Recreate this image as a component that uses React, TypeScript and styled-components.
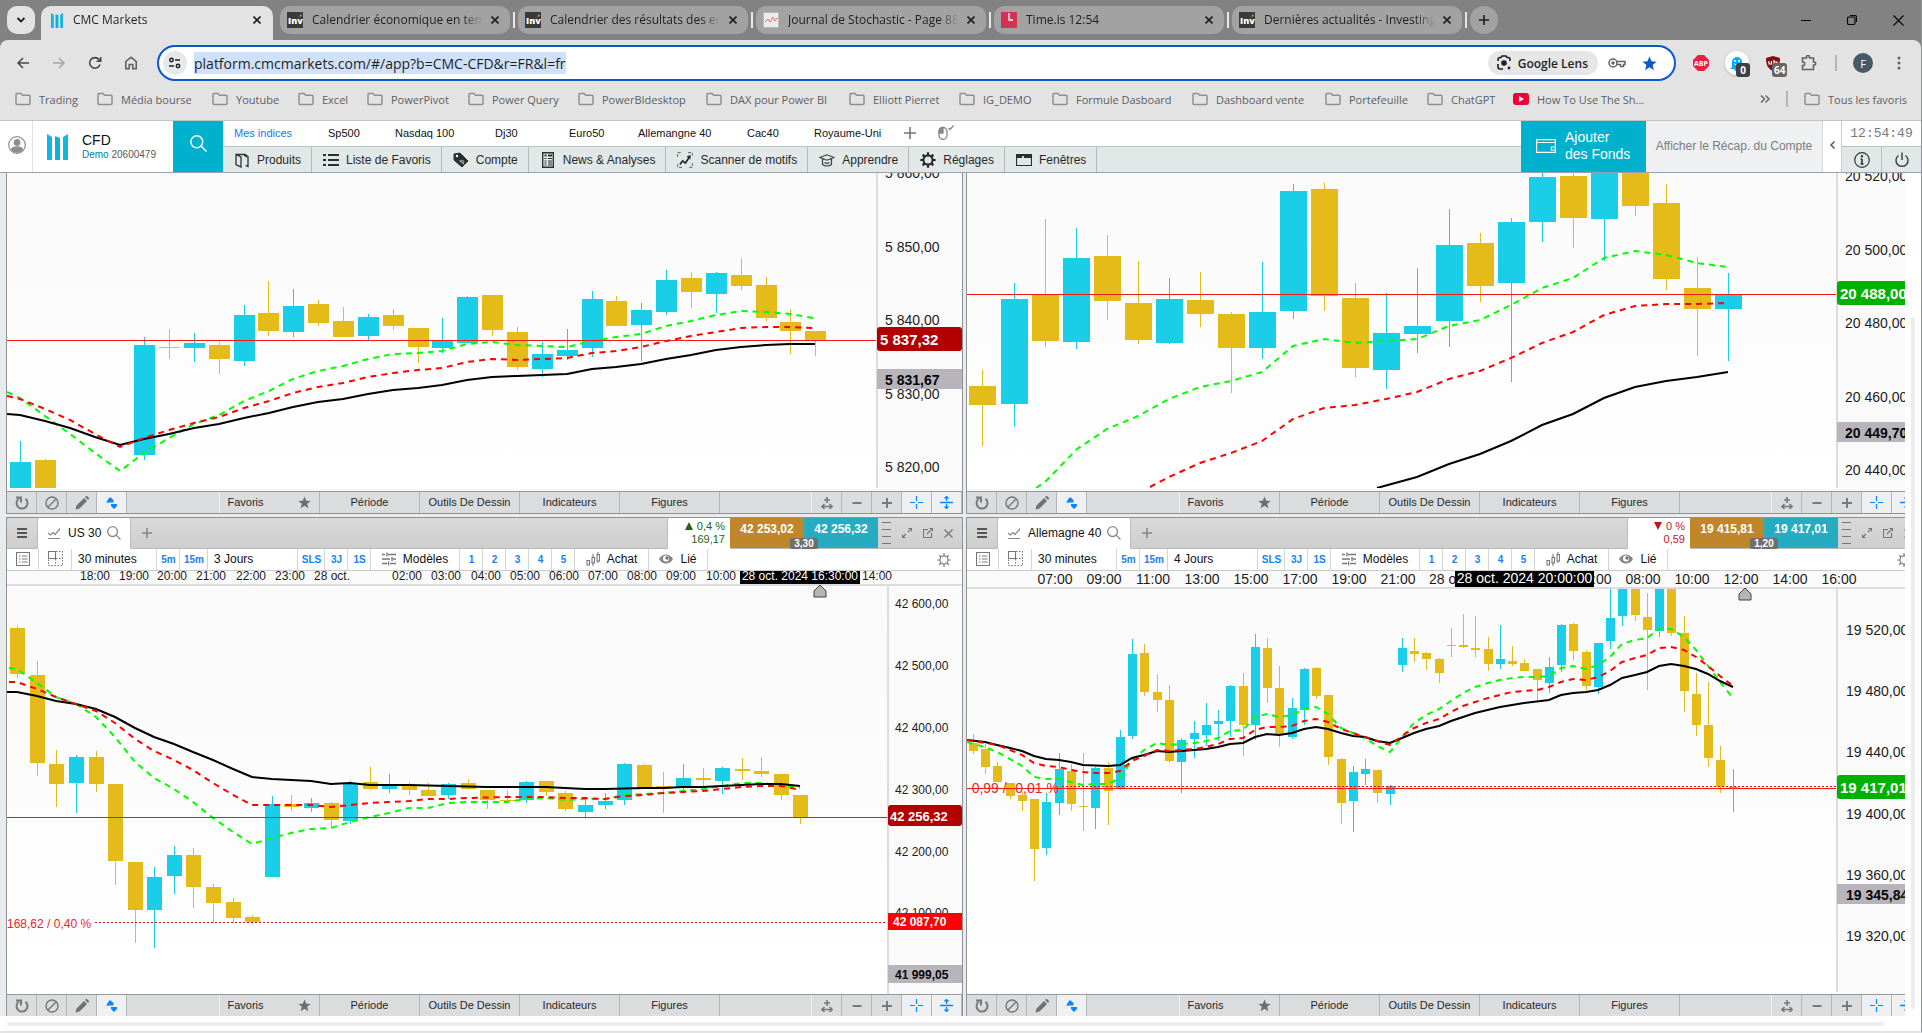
import React from "react";
import styled, { createGlobalStyle, css } from "styled-components";

const UI = `"Open Sans", "Noto Sans", sans-serif`;
const APP = `"Liberation Sans", Arial, sans-serif`;
const BLUE = "#1bcee8";
const GOLD = "#e5bb19";

const Global = createGlobalStyle`
  *, *::before, *::after { box-sizing: border-box; }
  html, body { margin: 0; padding: 0; }
  body { background: #fff; font-family: ${APP}; overflow: hidden; }
  button { font: inherit; color: inherit; border: 0; padding: 0; margin: 0; background: none; cursor: pointer; }
  a { color: inherit; text-decoration: none; }
  svg { display: block; flex: none; }
`;

/* ---------- layout shells ---------- */

const Page = styled.div`
  display: flex;
  flex-direction: column;
  min-height: 100vh;
  border-right: 1px solid #8e9298;
  border-bottom: 2px solid #e2e3e5;
  overflow: hidden;
`;

const center = css`
  display: flex;
  align-items: center;
  justify-content: center;
`;

/* ---------- browser tab strip ---------- */

const TabStrip = styled.header`
  display: flex;
  height: 40px;
  padding: 6px 0 0 7px;
  background: #828282;
  font-family: ${UI};
  font-size: 12px;
  color: #1f1f1f;
`;

const TabSearch = styled.button`
  ${center}
  width: 28px;
  height: 28px;
  margin-right: 6px;
  border-radius: 10px;
  background: #e3e3e3;
`;

const ActiveTab = styled.div`
  position: relative;
  display: flex;
  align-items: center;
  width: 232px;
  height: 34px;
  margin-right: 7px;
  padding: 0 8px 6px 9px;
  border-radius: 10px 10px 0 0;
  background: #e3e3e3;
`;

const Tab = styled.div`
  display: flex;
  align-items: center;
  width: 230px;
  height: 28px;
  padding: 0 7px;
  border-radius: 10px;
  background: #a2a2a2;
`;

const TabTitle = styled.a`
  flex: 1;
  margin: 0 4px 0 9px;
  overflow: hidden;
  white-space: nowrap;
  line-height: 20px;
  mask-image: linear-gradient(90deg, #000 88%, transparent);
`;

const TabClose = styled.button`
  ${center}
  width: 16px;
  height: 16px;
`;

const TabRule = styled.span`
  width: 2px;
  height: 16px;
  margin: 6px 3px 0;
  background: #e6e6e6;
`;

const NewTab = styled.button`
  ${center}
  width: 28px;
  height: 28px;
  border-radius: 14px;
  background: #a2a2a2;
`;

const WindowButtons = styled.div`
  display: flex;
  margin-left: auto;
`;

const WindowButton = styled.button`
  ${center}
  width: 46px;
  height: 28px;
`;

/* ---------- browser toolbar ---------- */

const Chrome = styled.div`
  background: #828282;
`;

const Toolbar = styled.div`
  display: flex;
  align-items: center;
  height: 42px;
  padding: 4px 4px 0 5px;
  border-radius: 8px 8px 0 0;
  background: #e3e3e3;
  font-family: ${UI};
`;

const NavButton = styled.button`
  ${center}
  width: 36px;
  height: 36px;
`;

const AddressBar = styled.form`
  display: flex;
  align-items: center;
  flex: 1;
  height: 36px;
  margin: 0 7px 0 8px;
  padding: 0 14px 0 4px;
  border: 2px solid #0b57d0;
  border-radius: 18px;
  background: #fff;
`;

const SiteInfo = styled.button`
  ${center}
  width: 24px;
  height: 24px;
  margin-right: 7px;
  border-radius: 12px;
  background: #e6e8ea;
`;

const UrlInput = styled.input`
  field-sizing: content;
  height: 22px;
  margin: 0 auto 0 0;
  padding: 0;
  border: 0;
  outline: 0;
  background: #d0e1fc;
  color: #1f1f1f;
  font: 14px ${UI};
`;

const LensButton = styled.button`
  display: flex;
  align-items: center;
  gap: 6px;
  height: 24px;
  margin-right: 8px;
  padding: 0 10px 0 8px;
  border-radius: 12px;
  background: #e6e6e6;
  font-size: 12px;
  font-weight: 600;
  color: #1f1f1f;
`;

const BarButton = styled.button`
  ${center}
  width: 22px;
  height: 24px;
  & + & { margin-left: 10px; }
`;

const ExtButton = styled.button`
  ${center}
  position: relative;
  width: 36px;
  height: 36px;
`;

const ExtBadge = styled.span<{ $dark?: boolean }>`
  position: absolute;
  left: 17px;
  top: 18px;
  height: 14px;
  min-width: 14px;
  padding: 0 2px;
  border-radius: 3px;
  background: ${(p) => (p.$dark ? "#3c4043" : "#666")};
  color: #fff;
  font-size: 10px;
  font-weight: 700;
  line-height: 14px;
  text-align: center;
`;

const GhostDisc = styled.span`
  ${center}
  width: 24px;
  height: 24px;
  border-radius: 12px;
  background: #fff;
  box-shadow: 0 1px 3px #0003;
`;

const Avatar = styled.span`
  ${center}
  width: 20px;
  height: 20px;
  border-radius: 10px;
  background: #455a64;
  color: #fff;
  font-size: 11px;
`;

const VRule = styled.span<{ $gap: number }>`
  width: 2px;
  height: 16px;
  margin: 0 ${(p) => p.$gap}px;
  background: #b5b5b5;
`;

const Bookmarks = styled.nav`
  display: flex;
  align-items: center;
  height: 39px;
  padding: 0 14px 4px 15px;
  border-bottom: 1px solid #c3c5c5;
  background: #e3e3e3;
  font-family: ${UI};
  font-size: 11px;
  color: #5c6063;
`;

const Bookmark = styled.a<{ $w?: number }>`
  display: flex;
  align-items: center;
  gap: 8px;
  flex: none;
  width: ${(p) => (p.$w ? `${p.$w}px` : "auto")};
  white-space: nowrap;
`;

const BookmarksEnd = styled.div`
  display: flex;
  align-items: center;
  margin-left: auto;
`;

/* ---------- platform header ---------- */

const AppHeader = styled.header`
  display: flex;
  height: 52px;
  border-bottom: 1px solid #95a3b3;
  background: #fff;
`;

const UserButton = styled.button`
  ${center}
  width: 33px;
  padding-left: 2px;
  padding-bottom: 3px;
  border-right: 1px solid #dfe1e3;
`;

const Brand = styled.div`
  display: flex;
  align-items: center;
  width: 140px;
  padding-left: 14px;
  gap: 14px;
`;

const AccountName = styled.div`
  font-size: 14px;
  line-height: 16px;
  color: #111;
`;

const AccountId = styled.div`
  font-size: 10px;
  line-height: 14px;
  color: #55595c;
  white-space: nowrap;
  span { color: #00819a; }
`;

const SearchButton = styled.button`
  ${center}
  width: 50px;
  padding-bottom: 6px;
  background: #00b1cd;
`;

const Menus = styled.div`
  display: flex;
  flex-direction: column;
  flex: 1;
`;

const LayoutRow = styled.nav`
  display: flex;
  align-items: center;
  height: 25px;
  padding: 0 0 2px 11px;
  font-size: 11px;
  color: #111;
`;

const LayoutLink = styled.a<{ $w: number; $on?: boolean }>`
  width: ${(p) => p.$w}px;
  color: ${(p) => (p.$on ? "#0a7cff" : "inherit")};
  white-space: nowrap;
`;

const LayoutButton = styled.button`
  ${center}
  width: 20px;
  margin-right: 16px;
`;

const MenuRow = styled.nav`
  display: flex;
  height: 26px;
  border-top: 1px solid #b9c0c3;
  background: #e2e8e8;
`;

const MenuItem = styled.button`
  display: flex;
  align-items: center;
  gap: 7px;
  padding: 0 10px 0 11px;
  border-right: 1px solid #b3babc;
  font-size: 12px;
  color: #26292b;
  white-space: nowrap;
`;

const AddFunds = styled.button`
  display: flex;
  align-items: center;
  gap: 9px;
  width: 125px;
  padding: 0 0 1px 15px;
  background: #00b1cd;
  color: #fff;
  font-size: 14px;
  line-height: 17px;
  text-align: left;
`;

const Recap = styled.button`
  width: 177px;
  padding-bottom: 2px;
  background: #eff0f2;
  border-right: 1px solid #d5d8da;
  color: #7a7d80;
  font-size: 12px;
`;

const Collapse = styled.button`
  ${center}
  width: 19px;
  padding-bottom: 4px;
  border-right: 1px solid #c9cccf;
`;

const ClockBox = styled.div`
  width: 79px;
`;

const Clock = styled.time`
  ${center}
  height: 25px;
  font: 13px "Liberation Mono", monospace;
  color: #777b7e;
`;

const ClockRow = styled.div`
  display: flex;
  height: 26px;
  border-top: 1px solid #b9c0c3;
  background: #e2e8e8;
`;

const ClockButton = styled.button`
  ${center}
  flex: 1;
  & + & { border-left: 1px solid #b9c0c3; }
`;

/* ---------- workspace ---------- */

const Workspace = styled.main`
  display: flex;
  flex: 1;
`;

const Viewport = styled.div`
  flex: 1;
  min-width: 0;
  overflow: hidden;
`;

const Panels = styled.div`
  display: grid;
  grid-template-columns: repeat(2, minmax(957px, 1fr));
  gap: 3px;
  padding-left: 6px;
  background: #e9ebed;
`;

const Panel = styled.section`
  display: flex;
  flex-direction: column;
  border: solid #8f9397;
  border-width: 0 1px;
  background: #fafafa;
`;

const HScroll = styled.div`
  height: 4px;
  margin: 6px 21px 0 7px;
  border-radius: 2px;
  background: #ecedef;
`;

const Gutter = styled.div`
  flex: none;
  width: 16px;
  padding: 144px 5px 22px 6px;
`;

const VThumb = styled.div`
  height: 100%;
  width: 4px;
  border-radius: 2px;
  background: #ecedef;
`;

const PanelHead = styled.div`
  display: flex;
  height: 32px;
  border-top: 1px solid #8f9397;
  border-bottom: 1px solid #b9bbbd;
  background: linear-gradient(#d9d9d9, #cecece);
`;

const HeadMenu = styled.button`
  ${center}
  width: 31px;
  border-right: 1px solid #b9bbbd;
`;

const ProductTab = styled.div`
  display: flex;
  align-items: center;
  height: 31px;
  padding: 0 9px 2px 10px;
  border-right: 1px solid #b9bbbd;
  background: #fff;
  font-size: 12px;
  color: #111;
`;

const ProductName = styled.span`
  margin: 0 6px 0 8px;
`;

const HeadAdd = styled.button`
  ${center}
  width: 31px;
`;

const Change = styled.div<{ $up: boolean }>`
  width: 63px;
  height: 31px;
  margin-left: auto;
  padding: 2px 5px 0 0;
  border-left: 1px solid #b9bbbd;
  background: #fff;
  color: ${(p) => (p.$up ? "#1d6410" : "#c01818")};
  font-size: 11px;
  line-height: 13px;
  text-align: right;
  white-space: nowrap;
`;

const Arrow = styled.span<{ $up: boolean }>`
  display: inline-block;
  margin-right: 4px;
  border: solid transparent;
  border-width: ${(p) => (p.$up ? "0 4px 8px" : "8px 4px 0")};
  border-${(p) => (p.$up ? "bottom" : "top")}-color: currentColor;
`;

const Quotes = styled.div`
  position: relative;
  display: flex;
`;

const Quote = styled.button<{ $buy?: boolean }>`
  width: 74px;
  height: 30px;
  padding-bottom: 9px;
  background: ${(p) => (p.$buy ? "#27abc1" : "#c0862a")};
  color: #fff;
  font-size: 12px;
  font-weight: 700;
`;

const Spread = styled.span`
  position: absolute;
  left: 60px;
  top: 20px;
  width: 28px;
  height: 11px;
  border-radius: 2px;
  background: #6f6f6f;
  color: #fff;
  font-size: 10px;
  font-weight: 700;
  line-height: 12px;
  text-align: center;
`;

const HeadTools = styled.div`
  display: flex;
  align-items: center;
  justify-content: space-between;
  width: 84px;
  padding: 0 9px 0 4px;
`;

const PlainButton = styled.button`
  ${center}
`;

const PeriodBar = styled.div`
  display: flex;
  height: 22px;
  border-bottom: 1px solid #c9cbcd;
  background: #fff;
  color: #111;
  font-size: 12px;
`;

const PeriodCell = styled.button<{ $w: number; $left?: boolean }>`
  display: flex;
  align-items: center;
  justify-content: ${(p) => (p.$left ? "flex-start" : "center")};
  gap: 7px;
  flex: none;
  width: ${(p) => p.$w}px;
  padding: 0 0 2px ${(p) => (p.$left ? "6px" : "0")};
  border-right: 1px solid #d3d5d7;
`;

const QuickCell = styled(PeriodCell)`
  padding: 0 0 0 1px;
  color: #1582f5;
  font-size: 10px;
  font-weight: 700;
`;

const GearButton = styled.button`
  ${center}
  width: 36px;
  margin-left: auto;
`;

const PanelFoot = styled.div<{ $closed?: boolean }>`
  display: flex;
  height: ${(p) => (p.$closed ? 23 : 22)}px;
  border-top: 1px solid #95989b;
  border-bottom: ${(p) => (p.$closed ? "1px solid #8f9397" : "0")};
  background: #dbdcde;
  color: #26292b;
  font-size: 11px;
`;

const FootIcon = styled.button<{ $on?: boolean }>`
  ${center}
  width: 30px;
  border-right: 1px solid #b4b6b8;
  background: ${(p) => (p.$on ? "#eef0f2" : "none")};
`;

const FootSpace = styled.span`
  flex: 1;
  border-right: 1px solid #f0f0f0;
`;

const FootLabel = styled.button<{ $star?: boolean }>`
  ${center}
  justify-content: ${(p) => (p.$star ? "space-between" : "center")};
  width: 100px;
  padding: ${(p) => (p.$star ? "0 8px 1px" : "0 0 1px 1px")};
  border-right: 1px solid #b4b6b8;
`;

const ChartSvg = styled.svg`
  font-family: ${APP};
`;

/* ---------- small icons ---------- */

type IconProps = { s?: number; w?: number; c?: string; sw?: number; children: React.ReactNode };
const Icon = ({ s = 16, w, c = "#444", sw = 1.5, children }: IconProps) => (
  <svg width={w ?? s} height={s} viewBox={`0 0 ${w ?? s} ${s}`} fill="none" stroke={c} strokeWidth={sw} aria-hidden="true">
    {children}
  </svg>
);

const CloseX = ({ s = 8, c = "#1f1f1f", sw = 1.6 }: { s?: number; c?: string; sw?: number }) => (
  <Icon s={s} c={c} sw={sw}><path d={`M.5 .5L${s - 0.5} ${s - 0.5}M${s - 0.5} .5L.5 ${s - 0.5}`} /></Icon>
);
const Plus = ({ s = 10, c = "#1f1f1f", sw = 1.6 }: { s?: number; c?: string; sw?: number }) => (
  <Icon s={s} c={c} sw={sw}><path d={`M${s / 2} 0V${s}M0 ${s / 2}H${s}`} /></Icon>
);
const Folder = () => (
  <Icon c="#8d9092" sw={1.5}>
    <path d="M1 3.5a1 1 0 0 1 1-1h4l1.7 1.8H14a1 1 0 0 1 1 1v7.2a1 1 0 0 1-1 1H2a1 1 0 0 1-1-1z" />
  </Icon>
);
const CmcLogo = ({ w, h }: { w: number; h: number }) => (
  <svg width={w} height={h} viewBox="0 0 21 26" aria-hidden="true">
    <path d="M0 0L5 3V26H0z" fill="#14b4e6" />
    <path d="M8 2L13 4V26H8z" fill="#10b0d4" />
    <path d="M16 3L21 0V26H16z" fill="#12b8dc" />
  </svg>
);
const InvIcon = () => (
  <svg width="16" height="16" viewBox="0 0 16 16" aria-hidden="true">
    <rect width="16" height="16" fill="#3a3a3a" />
    <text x="1" y="12" fontFamily={UI} fontSize="9" fontWeight="800" fill="#fff">Inv</text>
    <path d="M12 5l2-3 .8 2z" fill="#f59b00" />
  </svg>
);
const JournalIcon = () => (
  <svg width="16" height="16" viewBox="0 0 16 16" aria-hidden="true">
    <rect x=".5" y=".5" width="15" height="15" rx="1" fill="#ececec" stroke="#bbb" />
    <path d="M2 10l3-3 2 3 3-5 2 4 2-3" fill="none" stroke="#e06a6a" />
  </svg>
);
const TimeIcon = () => (
  <svg width="16" height="16" viewBox="0 0 16 16" aria-hidden="true">
    <rect width="16" height="16" fill="#d23354" />
    <path d="M8 1v7h4" fill="none" stroke="#fff" strokeWidth="1.3" />
  </svg>
);
const Magnifier = ({ s, c, sw }: { s: number; c: string; sw: number }) => (
  <Icon s={s} c={c} sw={sw}>
    <circle cx={s * 0.4} cy={s * 0.4} r={s * 0.35} />
    <path d={`M${s * 0.65} ${s * 0.65}L${s - 0.5} ${s - 0.5}`} />
  </Icon>
);
const Star = ({ s = 16, c }: { s?: number; c: string }) => (
  <svg width={s} height={s} viewBox="0 0 16 16" aria-hidden="true">
    <path d="M8 .5l2.1 5.2 5.4.4-4.2 3.5 1.4 5.6L8 12.1l-4.7 3.1 1.4-5.6L.5 6.1l5.4-.4z" fill={c} />
  </svg>
);
const Gear = ({ s = 16, solid }: { s?: number; solid?: boolean }) => (
  <svg width={s} height={s} viewBox="0 0 16 16" fill="none" stroke={solid ? "#2c2c2c" : "#777"} aria-hidden="true">
    <circle cx="8" cy="8" r="4.6" strokeWidth={solid ? 2.2 : 1.3} />
    <path d="M8 .3v3M8 12.700v3M.3 8h3M12.700 8h3M2.600 2.600l2 2M11.400 11.400l2 2M2.600 13.400l2-2M11.400 4.600l2-2" strokeWidth={solid ? 2.2 : 1.4} />
  </svg>
);

/* ---------- charts ---------- */

/* [centre x, high, body top, body bottom, low, kind]: 0 falling, 1 rising, 2 flat */
type Candle = [number, number, number, number, number, (0 | 1 | 2)?];

type ChartSpec = {
  x: number;
  y: number;
  h: number;
  plotTop: number;
  plotBottom: number;
  axisX: number;
  candleW: number;
  candles: Candle[];
  fast: string;
  medium: string;
  slow: string;
  priceY: number;
  prices: [string, number][];
  priceX: number;
  size: number;
  last: { text: string; y: number; h: number; base: number; x: number; size: number; fill: string };
  cross: { text: string; y: number; h: number; base: number; x: number };
  reference?: { text: string; y: number; x: number; base: number; from: number };
  times?: [string, number][];
  timeBase?: number;
  timeCross?: { text: string; x: number; w: number; h: number };
  marker?: number;
  extra?: React.ReactNode;
  label: string;
};

const Chart = ({ c }: { c: ChartSpec }) => {
  const half = (c.candleW - 1) / 2;
  const id = c.label.replace(/\s/g, "");
  return (
    <ChartSvg width="955" height={c.h} viewBox={`${c.x} ${c.y} 955 ${c.h}`} role="img" aria-label={c.label}>
      <defs>
        <linearGradient id={`${id}-bg`} x1="0" x2="0" y1="0" y2="1">
          <stop offset="0" stopColor="#fafafa" />
          <stop offset="1" stopColor="#fff" />
        </linearGradient>
        <clipPath id={`${id}-plot`}>
          <rect x={c.x} y={c.plotTop} width={c.axisX - c.x} height={c.plotBottom - c.plotTop} />
        </clipPath>
      </defs>
      <rect x={c.x} y={c.y} width="955" height={c.h} fill="#fafafa" />
      <rect x={c.x} y={c.plotTop} width={c.axisX - c.x} height={c.plotBottom - c.plotTop} fill={`url(#${id}-bg)`} />
      <g clipPath={`url(#${id}-plot)`}>
        <g shapeRendering="crispEdges">
          {c.candles.map(([cx, hi, top, bot, lo, kind = 0]) => {
            const fill = kind === 1 ? BLUE : kind === 2 ? "#b9b9bb" : GOLD;
            return (
              <g key={cx} fill={fill}>
                <rect x={cx} y={hi} width="1" height={Math.max(lo - hi, 1)} />
                <rect x={cx - half} y={top} width={c.candleW} height={bot - top} />
              </g>
            );
          })}
        </g>
        <polyline points={c.fast} fill="none" stroke="#0f0" strokeWidth="2" strokeDasharray="6 5" />
        <polyline points={c.slow} fill="none" stroke="#000" strokeWidth="2" />
        <polyline points={c.medium} fill="none" stroke="#f00" strokeWidth="2" strokeDasharray="6 5" />
      </g>
      <rect x={c.axisX} y={c.plotTop} width="2" height={c.plotBottom - c.plotTop} fill="#dcdcde" />
      {c.times && <rect x={c.x} y={c.plotTop - 2} width="955" height="2" fill="#dcdcde" />}
      <rect x={c.x} y={c.priceY} width={c.axisX - c.x} height="1" fill="#f01a10" />
      {c.reference && (
        <>
          <path d={`M${c.reference.from} ${c.reference.y}.5H${c.axisX}`} stroke="#e01010" strokeDasharray="2 2" />
          <text x={c.reference.x} y={c.reference.base} fontSize={c.size} fill="#f02424">{c.reference.text}</text>
        </>
      )}
      <g fontSize={c.size} fill="#1c1c1c">
        {c.prices.map(([t, y]) => <text key={t} x={c.priceX} y={y}>{t}</text>)}
        {c.times?.map(([t, x]) => <text key={t} x={x} y={c.timeBase} textAnchor="middle">{t}</text>)}
      </g>
      {c.extra}
      <rect x={c.axisX + 1} y={c.cross.y} width="90" height={c.cross.h} fill="#b8b4bc" />
      <text x={c.cross.x} y={c.cross.base} fontSize={c.size} fontWeight="700" fill="#050505">{c.cross.text}</text>
      <rect x={c.axisX + 1} y={c.last.y} width={c.x + 954 - c.axisX} height={c.last.h} rx="3" fill={c.last.fill} />
      <text x={c.last.x} y={c.last.base} fontSize={c.last.size} fontWeight="700" fill="#fff">{c.last.text}</text>
      {c.timeCross && (
        <>
          <rect x={c.timeCross.x} y={c.y} width={c.timeCross.w} height={c.timeCross.h} />
          <text x={c.timeCross.x + c.timeCross.w / 2} y={(c.timeBase ?? 0) - (c.size > 12 ? 1 : 0)} fontSize={c.size} fill="#fff" textAnchor="middle">
            {c.timeCross.text}
          </text>
        </>
      )}
      {c.marker && (
        <path d={`M${c.marker} ${c.plotTop - 1}l6 6v6h-12v-6z`} fill="#b5b5b5" stroke="#444" />
      )}
    </ChartSvg>
  );
};

const sp500: ChartSpec = {
  label: "Sp500", x: 7, y: 173, h: 318, plotTop: 173, plotBottom: 488, axisX: 876, candleW: 21,
  candles: [
    [20, 441, 462, 488, 488, 1], [45, 459, 460, 488, 488], [144, 337, 345, 455, 460, 1], [169, 329, 347, 348, 359, 2],
    [194, 333, 343, 348, 362, 1], [219, 342, 345, 359, 374], [244, 305, 315, 361, 366, 1], [268, 281, 313, 331, 336],
    [293, 289, 306, 332, 337, 1], [318, 300, 304, 323, 326], [343, 307, 321, 337, 337], [368, 314, 317, 336, 340, 1],
    [393, 309, 315, 326, 330], [418, 328, 328, 347, 363], [442, 318, 341, 348, 353, 1], [467, 296, 297, 343, 343, 1],
    [492, 295, 295, 330, 336], [517, 327, 332, 367, 370], [542, 342, 354, 369, 377, 1], [567, 329, 350, 356, 360, 1],
    [592, 291, 299, 348, 357, 1], [616, 296, 301, 326, 326], [641, 303, 310, 325, 361, 1], [666, 270, 280, 312, 315, 1],
    [691, 272, 278, 292, 308], [716, 272, 273, 294, 313, 1], [741, 258, 275, 286, 290], [766, 277, 285, 318, 321],
    [790, 309, 322, 331, 354], [815, 331, 331, 340, 356],
  ],
  fast: "7,392 20,398 45,416 70,434 95,453 120,471 144,453 169,438 194,424 219,415 244,401 269,391 293,379 318,371 343,366 368,359 393,354 418,353 442,351 467,344 492,342 517,345 542,346 567,347 592,341 616,337 641,334 666,326 691,321 716,315 741,311 766,312 790,314 813,318",
  medium: "7,396 20,399 45,409 70,420 95,434 120,447 144,438 169,430 194,423 219,417 244,408 269,401 293,393 318,387 343,383 368,377 393,373 418,370 442,368 467,362 492,359 517,360 542,359 567,358 592,353 616,351 641,347 666,341 691,336 716,332 741,328 766,327 790,327 815,328",
  slow: "7,414 20,415 45,421 70,428 95,437 120,445 144,439 169,434 194,428 219,424 244,418 269,413 293,407 318,402 343,399 368,394 393,390 418,388 442,385 467,380 492,377 517,376 542,375 567,374 592,369 616,367 641,364 666,359 691,355 716,350 741,347 766,345 790,344 815,344",
  priceY: 340, size: 14, priceX: 885,
  prices: [["5 860,00", 178], ["5 850,00", 252], ["5 840,00", 325], ["5 830,00", 399], ["5 820,00", 472]],
  last: { text: "5 837,32", y: 327, h: 24, base: 345, x: 880, size: 15, fill: "#b20000" },
  cross: { text: "5 831,67", y: 369, h: 20, base: 385, x: 885 },
};

const nasdaq: ChartSpec = {
  label: "Nasdaq 100", x: 967, y: 173, h: 318, plotTop: 173, plotBottom: 488, axisX: 1836, candleW: 27,
  candles: [
    [982, 370, 386, 405, 446], [1014, 283, 299, 404, 427, 1], [1045, 219, 295, 341, 347], [1076, 228, 258, 342, 349, 1],
    [1107, 235, 256, 301, 320], [1138, 261, 303, 340, 344], [1169, 278, 299, 343, 344, 1], [1200, 272, 300, 314, 327],
    [1231, 312, 314, 348, 393], [1262, 262, 312, 348, 359, 1], [1293, 184, 191, 311, 319, 1], [1324, 183, 189, 296, 311],
    [1355, 283, 298, 368, 377], [1386, 293, 333, 370, 389, 1], [1417, 268, 326, 334, 353, 1], [1449, 209, 245, 321, 347, 1],
    [1480, 233, 243, 286, 302], [1511, 218, 222, 283, 382, 1], [1542, 173, 177, 222, 242, 1], [1573, 173, 176, 218, 248],
    [1604, 173, 173, 219, 261, 1], [1635, 173, 173, 206, 216], [1666, 184, 203, 279, 290], [1697, 257, 288, 309, 356],
    [1728, 273, 295, 309, 361, 1],
  ],
  fast: "1036,488 1046,481 1077,449 1107,429 1138,416 1169,399 1200,387 1231,381 1262,372 1293,346 1324,339 1355,343 1386,341 1417,339 1449,326 1480,320 1511,305 1542,288 1573,278 1604,258 1635,251 1666,255 1697,263 1727,267",
  medium: "1150,487 1169,477 1200,463 1231,453 1262,441 1293,419 1324,408 1355,405 1386,399 1417,392 1449,379 1480,371 1511,358 1542,343 1573,332 1604,315 1635,306 1666,304 1697,304 1728,303",
  slow: "1377,488 1417,477 1449,464 1480,454 1511,441 1542,425 1573,414 1604,398 1635,387 1666,381 1697,377 1728,372",
  priceY: 294, size: 14, priceX: 1845,
  prices: [["20 520,00", 181], ["20 500,00", 255], ["20 480,00", 328], ["20 460,00", 402], ["20 440,00", 475]],
  last: { text: "20 488,00", y: 281, h: 24, base: 299, x: 1840, size: 15, fill: "#00b200" },
  cross: { text: "20 449,70", y: 422, h: 20, base: 438, x: 1845 },
};

const us30: ChartSpec = {
  label: "US 30", x: 7, y: 571, h: 423, plotTop: 586, plotBottom: 994, axisX: 887, candleW: 15,
  candles: [
    [17, 626, 628, 674, 678], [37, 661, 675, 763, 776], [56, 750, 764, 784, 807], [76, 755, 757, 783, 813, 1],
    [96, 751, 757, 784, 792], [115, 784, 784, 861, 885], [135, 862, 862, 910, 943], [154, 867, 877, 910, 948, 1],
    [174, 846, 855, 876, 894, 1], [193, 848, 855, 887, 908], [213, 884, 887, 903, 923], [233, 898, 902, 918, 923],
    [252, 915, 917, 922, 924], [272, 796, 804, 877, 877, 1], [291, 795, 804, 807, 811], [311, 798, 803, 808, 812, 1],
    [331, 802, 803, 820, 828], [350, 781, 783, 821, 824, 1], [370, 767, 782, 789, 790], [389, 774, 785, 789, 793, 1],
    [409, 782, 786, 790, 795], [428, 783, 790, 796, 796], [448, 783, 784, 795, 799, 1], [468, 779, 783, 789, 790],
    [487, 790, 790, 800, 809], [507, 790, 800, 801, 801], [526, 781, 782, 800, 803, 1], [546, 781, 781, 792, 796],
    [565, 791, 793, 809, 811], [585, 800, 805, 812, 817, 1], [605, 793, 801, 805, 809, 1], [624, 763, 764, 800, 805, 1],
    [644, 764, 765, 788, 788], [663, 772, 786, 789, 813], [683, 764, 778, 788, 790, 1], [703, 768, 778, 780, 788],
    [722, 767, 768, 781, 794, 1], [742, 758, 769, 771, 780], [761, 757, 771, 774, 777], [781, 774, 774, 795, 800],
    [800, 795, 795, 817, 824],
  ],
  fast: "9,668 17,669 37,683 56,697 76,704 96,717 115,737 135,762 154,778 174,789 193,802 213,818 233,832 252,844 272,838 291,833 311,829 331,828 350,822 370,817 389,813 409,808 428,808 448,803 468,802 507,802 526,799 546,798 565,800 585,799 605,799 624,795 644,794 663,793 683,791 703,789 722,786 742,783 761,783 781,785 800,788",
  medium: "9,682 17,682 37,689 56,697 76,704 96,711 115,723 135,739 154,751 174,760 193,770 213,783 233,795 252,805 272,805 291,805 311,805 331,807 350,805 370,803 389,802 409,801 428,799 448,799 468,798 507,797 526,797 546,797 565,798 585,798 605,799 624,796 644,795 663,793 683,792 703,791 722,789 742,787 761,786 781,786 800,790",
  slow: "7,692 17,692 37,696 56,701 76,704 96,709 115,717 135,728 154,737 174,744 193,752 213,760 233,769 252,777 272,779 311,781 331,784 350,783 370,785 409,785 448,786 487,787 546,787 565,788 585,789 605,789 644,788 663,788 683,787 703,787 722,786 742,785 761,784 781,784 800,786",
  priceY: 817, size: 12, priceX: 895,
  prices: [["42 600,00", 608], ["42 500,00", 670], ["42 400,00", 732], ["42 300,00", 794], ["42 200,00", 856], ["42 100,00", 917]],
  last: { text: "42 256,32", y: 805, h: 21, base: 821, x: 890, size: 13, fill: "#b20000" },
  cross: { text: "41 999,05", y: 965, h: 18, base: 979, x: 895 },
  reference: { text: "168,62 / 0,40 %", y: 922, x: 7, base: 928, from: 95 },
  times: [
    ["18:00", 95], ["19:00", 134], ["20:00", 172], ["21:00", 211], ["22:00", 251], ["23:00", 290], ["28 oct.", 332],
    ["02:00", 407], ["03:00", 446], ["04:00", 486], ["05:00", 525], ["06:00", 564], ["07:00", 603], ["08:00", 642],
    ["09:00", 681], ["10:00", 721], ["14:00", 877],
  ],
  timeBase: 580,
  timeCross: { text: "28 oct. 2024 16:30:00", x: 740, w: 120, h: 13 },
  marker: 820,
  extra: (
    <>
      <rect x="888" y="913" width="74" height="17" fill="#f00" />
      <text x="893" y="926" fontSize="12" fontWeight="700" fill="#fff">42 087,70</text>
    </>
  ),
};

const dax40: ChartSpec = {
  label: "Allemagne 40", x: 967, y: 571, h: 423, plotTop: 589, plotBottom: 992, axisX: 1836, candleW: 9,
  candles: [
    [973, 734, 743, 751, 754], [985, 744, 749, 767, 774], [997, 762, 766, 782, 782], [1010, 783, 783, 796, 799],
    [1022, 792, 795, 801, 811], [1034, 799, 799, 849, 881], [1046, 793, 802, 848, 855, 1], [1059, 753, 769, 803, 815, 1],
    [1071, 764, 771, 804, 811], [1083, 753, 806, 807, 831], [1095, 767, 768, 808, 829, 1], [1108, 762, 768, 791, 825],
    [1120, 730, 737, 788, 790, 1], [1132, 639, 654, 736, 739, 1], [1144, 644, 653, 692, 696], [1157, 674, 692, 700, 712],
    [1169, 685, 700, 761, 763], [1181, 738, 740, 762, 793, 1], [1194, 721, 733, 739, 758, 1], [1206, 703, 725, 735, 746, 1],
    [1218, 710, 721, 724, 741, 1], [1230, 685, 686, 721, 737, 1], [1243, 673, 686, 725, 756], [1255, 634, 647, 725, 740, 1],
    [1267, 638, 648, 688, 703], [1279, 666, 688, 735, 747], [1292, 698, 708, 737, 739, 1], [1304, 668, 669, 710, 725, 1],
    [1316, 667, 668, 696, 699], [1328, 695, 695, 757, 765], [1341, 758, 759, 803, 824], [1353, 766, 772, 801, 832, 1],
    [1365, 759, 769, 774, 785, 1], [1377, 770, 770, 793, 803], [1390, 785, 786, 794, 805, 1], [1402, 638, 648, 665, 672, 1],
    [1414, 638, 651, 654, 662], [1426, 652, 653, 659, 670], [1439, 658, 659, 673, 683], [1451, 628, 645, 646, 657],
    [1463, 614, 645, 647, 648], [1475, 616, 648, 650, 657], [1488, 637, 649, 664, 671], [1500, 625, 659, 664, 669, 1],
    [1512, 646, 661, 664, 666], [1524, 659, 663, 671, 671], [1537, 669, 669, 680, 700], [1549, 657, 667, 683, 693, 1],
    [1561, 624, 625, 665, 672, 1], [1573, 623, 624, 651, 660], [1586, 650, 652, 686, 690], [1598, 643, 643, 687, 694, 1],
    [1610, 588, 618, 641, 649, 1], [1622, 588, 588, 616, 626, 1], [1635, 588, 588, 615, 621], [1647, 593, 617, 630, 690],
    [1659, 588, 588, 631, 637, 1], [1671, 588, 588, 633, 636], [1684, 616, 633, 691, 712], [1696, 673, 694, 725, 736],
    [1708, 682, 725, 758, 767], [1720, 746, 760, 787, 793], [1733, 769, 787, 788, 812, 1],
  ],
  fast: "967,742 973,744 985,747 997,752 1010,759 1022,766 1034,777 1046,779 1059,779 1071,782 1083,785 1095,784 1108,784 1120,778 1132,760 1144,750 1157,743 1169,745 1181,744 1194,743 1206,741 1218,738 1230,731 1243,730 1255,717 1267,714 1279,717 1292,715 1304,709 1316,707 1328,714 1341,728 1353,733 1365,738 1377,746 1390,752 1402,737 1414,723 1426,715 1439,709 1451,701 1463,693 1475,687 1488,683 1500,680 1512,678 1524,677 1537,677 1549,676 1561,668 1573,666 1586,669 1598,665 1610,657 1622,644 1635,640 1647,638 1659,629 1671,629 1684,637 1696,650 1708,666 1720,682 1733,698",
  medium: "967,740 973,741 985,743 997,745 1010,750 1022,755 1034,763 1046,766 1059,767 1071,770 1083,772 1095,773 1108,773 1120,771 1132,761 1144,756 1157,750 1169,751 1181,750 1194,749 1206,747 1218,744 1230,739 1243,738 1255,730 1267,727 1279,727 1292,726 1304,721 1316,719 1328,722 1341,729 1353,733 1365,737 1377,741 1390,745 1402,736 1414,728 1426,723 1439,719 1451,712 1463,706 1475,702 1488,698 1500,695 1512,692 1524,691 1537,690 1549,687 1561,682 1573,679 1586,680 1598,677 1610,671 1622,662 1635,658 1647,655 1659,648 1671,647 1684,650 1696,657 1708,666 1720,676 1733,686",
  slow: "967,740 985,742 997,745 1010,748 1022,751 1034,756 1046,759 1059,760 1071,762 1083,765 1108,766 1120,765 1132,758 1144,755 1157,751 1169,752 1194,750 1206,749 1218,747 1230,744 1243,743 1255,737 1267,734 1279,735 1292,733 1304,729 1316,727 1328,729 1341,733 1353,736 1365,737 1377,741 1390,743 1402,738 1414,733 1426,729 1439,726 1451,721 1463,717 1475,713 1500,707 1524,703 1549,700 1561,695 1573,693 1586,692 1598,690 1610,685 1622,678 1635,675 1647,672 1659,666 1671,664 1684,666 1696,669 1708,674 1720,681 1733,687",
  priceY: 788, size: 14, priceX: 1846,
  prices: [["19 520,00", 635], ["19 480,00", 696], ["19 440,00", 757], ["19 400,00", 819], ["19 360,00", 880], ["19 320,00", 941]],
  last: { text: "19 417,01", y: 775, h: 24, base: 793, x: 1840, size: 15, fill: "#00b200" },
  cross: { text: "19 345,84", y: 884, h: 20, base: 900, x: 1846 },
  reference: { text: "-0,99 / -0,01 %", y: 786, x: 967, base: 793, from: 1062 },
  times: [
    ["07:00", 1055], ["09:00", 1104], ["11:00", 1153], ["13:00", 1202], ["15:00", 1251], ["17:00", 1300], ["19:00", 1349],
    ["21:00", 1398], ["28 oct.", 1450], ["06:00", 1594], ["08:00", 1643], ["10:00", 1692], ["12:00", 1741],
    ["14:00", 1790], ["16:00", 1839],
  ],
  timeBase: 584,
  timeCross: { text: "28 oct. 2024 20:00:00", x: 1455, w: 139, h: 16 },
  marker: 1745,
};

/* ---------- panel pieces ---------- */

const Footer = ({ closed }: { closed?: boolean }) => (
  <PanelFoot $closed={closed}>
    <FootIcon aria-label="Actualiser">
      <Icon s={14} c="#77797b" sw={2}><path d="M4 2.500A5.500 5.500 0 1 0 10.500 2.800" /><path d="M1 1.500h5v5" /></Icon>
    </FootIcon>
    <FootIcon aria-label="Effacer"><Icon s={14} c="#77797b" sw={1.5}><circle cx="7" cy="7" r="6" /><path d="M3 11L11 3" /></Icon></FootIcon>
    <FootIcon aria-label="Dessiner">
      <svg width="14" height="14" viewBox="0 0 14 14" fill="#6f7173" aria-hidden="true">
        <path d="M.5 13.500l1-4L9 2l3 3-7.500 7.500zM10 1l1-1h1l2 2v1l-1 1z" />
      </svg>
    </FootIcon>
    <FootIcon $on aria-label="Mise à l'échelle">
      <svg width="12" height="12" viewBox="0 0 12 12" fill="#0a84ff" aria-hidden="true">
        <path d="M4 0l3.500 3v2.500h-6V3zM5 7h6v2l-3 3-3-3z" /><path d="M0 5.500l3-3v3zM12 7l-3 3.500z" />
      </svg>
    </FootIcon>
    <FootSpace />
    <FootLabel $star>Favoris <Star s={13} c="#6b6d6f" /></FootLabel>
    <FootLabel>Période</FootLabel>
    <FootLabel>Outils De Dessin</FootLabel>
    <FootLabel>Indicateurs</FootLabel>
    <FootLabel>Figures</FootLabel>
    <FootSpace />
    <FootIcon aria-label="Ajuster">
      <Icon s={12} c="#77797b" sw={1.6}><path d="M6 0v6M3 3h6M1 9.500h10M3.500 7L1 9.500 3.500 12M8.500 7L11 9.500 8.500 12" /></Icon>
    </FootIcon>
    <FootIcon aria-label="Zoom arrière"><Icon s={10} c="#77797b" sw={2}><path d="M.5 5h9" /></Icon></FootIcon>
    <FootIcon aria-label="Zoom avant"><Plus s={10} c="#77797b" sw={2} /></FootIcon>
    <FootIcon $on aria-label="Viseur">
      <Icon s={13} c="#0a84ff" sw={1.2}><path d="M6.500 0v5M6.500 8v5M0 6.500h5M8 6.500h5" /></Icon>
    </FootIcon>
    <FootIcon $on aria-label="Niveau">
      <Icon s={13} c="#0a84ff" sw={1.3}><path d="M0 6.500h13M6.500 5V1M6.500 8v4M4.500 2.500l2-2 2 2M4.500 10.500l2 2 2-2" /></Icon>
    </FootIcon>
  </PanelFoot>
);

type ProductProps = { name: string; days: string; up: boolean; pct: string; pts: string; bid: string; ask: string; spread: string; chart: ChartSpec };

const ProductPanel = (p: ProductProps) => (
  <Panel>
    <PanelHead>
      <HeadMenu aria-label="Menu">
        <Icon s={10} c="#555" sw={2}><path d="M0 1h10M0 5h10M0 9h10" /></Icon>
      </HeadMenu>
      <ProductTab>
        <Icon s={12} c="#888" sw={1.2}><path d="M0 6l2.500 2L5 5.500 7 7.500 12 1.500M0 11.500h12" /></Icon>
        <ProductName>{p.name}</ProductName>
        <PlainButton aria-label="Rechercher"><Magnifier s={14} c="#888" sw={1.3} /></PlainButton>
      </ProductTab>
      <HeadAdd aria-label="Ajouter un onglet"><Plus s={10} c="#888" sw={1.6} /></HeadAdd>
      <Change $up={p.up}>
        <Arrow $up={p.up} />{p.pct}<br />{p.pts}
      </Change>
      <Quotes>
        <Quote>{p.bid}</Quote>
        <Quote $buy>{p.ask}</Quote>
        <Spread>{p.spread}</Spread>
      </Quotes>
      <HeadTools>
        <Icon w={9} s={24} c="#777" sw={1}><path d="M0 1.500h9M0 8.500h9M0 15.500h9M0 22.500h9" /></Icon>
        <PlainButton aria-label="Agrandir">
          <Icon s={10} c="#777" sw={1.1}><path d="M6 4l3.500-3.500M6.500.5h3v3M4 6L.5 9.500M.5 6.500v3h3" /></Icon>
        </PlainButton>
        <PlainButton aria-label="Détacher">
          <Icon s={10} c="#777" sw={1.1}><path d="M5 1.500H.5v8h8V5M4 6l5.500-5.500M6.500.5h3v3" /></Icon>
        </PlainButton>
        <PlainButton aria-label="Fermer"><CloseX s={9} c="#777" sw={1.3} /></PlainButton>
      </HeadTools>
    </PanelHead>
    <PeriodBar>
      <PeriodCell $w={32} aria-label="Liste">
        <Icon s={14} c="#777" sw={1.1}><path d="M.5.5h13v13H.5zM3 4h1.500M6 4h5.500M3 7h1.500M6 7h5.500M3 10h1.500M6 10h5.500" /></Icon>
      </PeriodCell>
      <PeriodCell $w={33} aria-label="Disposition">
        <Icon s={15} c="#777" sw={1.1}><path d="M.5.5h7v7h-7z" /><path d="M8 .5h6.500v14H.5V8M8 7.500h6.500M7.500 8v6.500" strokeDasharray="1.500 1.500" /></Icon>
      </PeriodCell>
      <PeriodCell $w={85} $left>30 minutes</PeriodCell>
      <QuickCell $w={23}>5m</QuickCell>
      <QuickCell $w={28}>15m</QuickCell>
      <PeriodCell $w={90} $left>{p.days}</PeriodCell>
      <QuickCell $w={27}>SLS</QuickCell>
      <QuickCell $w={23}>3J</QuickCell>
      <QuickCell $w={23}>1S</QuickCell>
      <PeriodCell $w={89}>
        <Icon s={14} c="#777" sw={1.4}><path d="M0 2.500h3M6 2.500h8M0 7h8M11 7h3M0 11.500h5M8 11.500h6M5 .5v4M10 5v4M6.500 9.500v4" /></Icon>
        Modèles
      </PeriodCell>
      {[1, 2, 3, 4, 5].map((n) => <QuickCell key={n} $w={23}>{n}</QuickCell>)}
      <PeriodCell $w={74}>
        <Icon s={14} c="#777" sw={1.1}><path d="M1 8.500h2.500V13H1zM6 5.500h2.500V11H6zM11 2.500h2.500V9H11zM7 2v3.500M7 11v3M12 0v2.500M12 9v2" /></Icon>
        Achat
      </PeriodCell>
      <PeriodCell $w={59}>
        <svg width="14" height="10" viewBox="0 0 14 10" aria-hidden="true">
          <path d="M0 5C3-1 11-1 14 5 11 11 3 11 0 5z" fill="#888" /><circle cx="7" cy="4.500" r="3" fill="#fff" /><circle cx="8" cy="4" r="1.800" fill="#777" />
        </svg>
        Lié
      </PeriodCell>
      <GearButton aria-label="Paramètres"><Gear s={14} /></GearButton>
    </PeriodBar>
    <Chart c={p.chart} />
    <Footer />
  </Panel>
);

/* ---------- data for the bars ---------- */

const bookmarks: [string, number][] = [
  ["Trading", 82], ["Média bourse", 115], ["Youtube", 86], ["Excel", 69], ["PowerPivot", 101], ["Power Query", 110],
  ["PowerBIdesktop", 128], ["DAX pour Power BI", 143], ["Elliott Pierret", 110], ["IG_DEMO", 93], ["Formule Dasboard", 140],
  ["Dashboard vente", 133], ["Portefeuille", 102], ["ChatGPT", 86],
];

const layouts: [string, number][] = [
  ["Mes indices", 94], ["Sp500", 67], ["Nasdaq 100", 100], ["Dj30", 74], ["Euro50", 69], ["Allemangne 40", 109], ["Cac40", 67], ["Royaume-Uni", 86],
];

const tabs: [string, React.ReactNode][] = [
  ["Calendrier économique en temps réel", <InvIcon />],
  ["Calendrier des résultats des entreprises", <InvIcon />],
  ["Journal de Stochastic - Page 884", <JournalIcon />],
  ["Time.is 12:54", <TimeIcon />],
  ["Dernières actualités - Investing.com", <InvIcon />],
];

const dark = "#2c2f31";
const menu: [string, React.ReactNode][] = [
  ["Produits", <Icon c={dark} sw={1.3}><path d="M2 2.500h9l3 2v10l-2.500-1M2 2.500l5 2.500v10l-5-2.500zM10 3l3 2" /></Icon>],
  ["Liste de Favoris", <Icon c={dark} sw={2}><path d="M0 3h3M5 3h11M0 8h3M5 8h11M0 13h3M5 13h11" /></Icon>],
  ["Compte", <Icon c={dark} sw={1}><path d="M1 2l6-1 8 8-6 6-8-7z" fill={dark} /><circle cx="4" cy="4" r="1.200" fill="#fff" stroke="none" /><path d="M7 9.500c1 1 2-2 3-1s1 2 0 3M6.500 8l4.500 4.500" stroke="#dfe5e5" strokeWidth=".9" /></Icon>],
  ["News & Analyses", <Icon c={dark} sw={1.4}><path d="M2.700.7h10.600v14.600H2.700z" /><path d="M4.500 3.500h2M8 3.500h4" strokeWidth="2" /><path d="M4.500 6.500h2M8 6.500h4M4.500 9h2M8 9h4M4.500 11h2M8 11h4M4.500 13h2M8 13h4" strokeWidth="1" /></Icon>],
  ["Scanner de motifs", <Icon c={dark} sw={1.4}><path d="M.6 5V.6H5M11 .6h4.400V5M15.400 11v4.400H11M5 15.400H.6V11" strokeDasharray="3 1.500" strokeWidth="1.100" stroke="#777" /><path d="M3 12.500l2.500-3.500 3 2L13 4" strokeWidth="1.800" /><path d="M9.500 4.500L13.500 3v4.500z" fill={dark} stroke="none" /></Icon>],
  ["Apprendre", <Icon c="#3c4042" sw={1.2}><path d="M.8 5.500L8 2.800l7.200 2.700L8 8.200zM3.500 7v5.500c2.500 2 6.500 2 9 0V7M5.500 10.500c1.500 1 3.500 1 5 0" /></Icon>],
  ["Réglages", <Gear solid />],
  ["Fenêtres", <Icon c={dark} sw={1.2}><path d="M.5 2.500h15v11H.5z" /><path d="M.5 2.500h15v3h-7v-2h-3v2h-5z" fill={dark} /></Icon>],
];

export default function App() {
  return (
    <Page>
      <Global />
      <TabStrip>
        <TabSearch aria-label="Rechercher des onglets"><Icon s={10} c="#1f1f1f" sw={1.8}><path d="M1.500 3L5 6.500 8.500 3" /></Icon></TabSearch>
        <ActiveTab>
          <CmcLogo w={14} h={15} />
          <TabTitle href="#cmc">CMC Markets</TabTitle>
          <TabClose aria-label="Fermer"><CloseX /></TabClose>
        </ActiveTab>
        {tabs.map(([t, icon]) => (
          <React.Fragment key={t}>
            <Tab>
              {icon}
              <TabTitle href="#tab">{t}</TabTitle>
              <TabClose aria-label="Fermer"><CloseX /></TabClose>
            </Tab>
            <TabRule />
          </React.Fragment>
        ))}
        <NewTab aria-label="Nouvel onglet"><Plus s={10} /></NewTab>
        <WindowButtons>
          <WindowButton aria-label="Réduire"><Icon s={10} c="#000" sw={1}><path d="M0 5.500h10" /></Icon></WindowButton>
          <WindowButton aria-label="Niveau inférieur">
            <Icon s={10} c="#000" sw={1.1}><rect x=".5" y="2" width="7.500" height="7.500" rx="1.500" /><path d="M3 .5h4.500a2 2 0 0 1 2 2V7" /></Icon>
          </WindowButton>
          <WindowButton aria-label="Fermer"><CloseX s={11} c="#000" sw={1.1} /></WindowButton>
        </WindowButtons>
      </TabStrip>

      <Chrome>
        <Toolbar>
          <NavButton aria-label="Retour"><Icon s={14} c="#474747" sw={1.5}><path d="M13 7H2M7 2L2 7l5 5" /></Icon></NavButton>
          <NavButton aria-label="Suivant"><Icon s={14} c="#a5a5a5" sw={1.5}><path d="M1 7h11M7 2l5 5-5 5" /></Icon></NavButton>
          <NavButton aria-label="Actualiser"><Icon s={14} c="#474747" sw={1.6}><path d="M12 8.500A5.300 5.300 0 1 1 11 3.500L12.500 5M12.700 1v4.300H8.500" /></Icon></NavButton>
          <NavButton aria-label="Accueil"><Icon s={14} c="#5f6368" sw={1.6}><path d="M1.800 5.500L7 1.300l5.200 4.200v7.300H8.800V8.500H5.200v4.300H1.800z" /></Icon></NavButton>
          <AddressBar onSubmit={(e) => e.preventDefault()}>
            <SiteInfo type="button" aria-label="Informations du site">
              <Icon s={12} c="#1f1f1f" sw={1.500}><circle cx="2.500" cy="3" r="1.700" /><path d="M6 3h5M0 9h5" /><circle cx="9" cy="9" r="1.700" /></Icon>
            </SiteInfo>
            <UrlInput aria-label="Adresse" defaultValue="platform.cmcmarkets.com/#/app?b=CMC-CFD&r=FR&l=fr" />
            <LensButton type="button">
              <Icon c="#1f1f1f" sw={1.600}><path d="M2 6V4.500a2 2 0 0 1 2-2h1l1-1.500h4l1 1.500h1a2 2 0 0 1 2 2V6M2 9v3a2 2 0 0 0 2 2h3" /><circle cx="8" cy="8" r="2" fill="#1f1f1f" /><circle cx="13" cy="13" r=".6" fill="#1f1f1f" /></Icon>
              Google Lens
            </LensButton>
            <BarButton type="button" aria-label="Mots de passe">
              <Icon w={18} s={12} c="#5f6368" sw={1.500}><circle cx="5" cy="6" r="4" /><circle cx="5" cy="6" r="1" fill="#5f6368" /><path d="M8.500 4.500H17v3h-1.500v2h-3v-2h-4" /></Icon>
            </BarButton>
            <BarButton type="button" aria-label="Favori"><Star s={15} c="#0b57d0" /></BarButton>
          </AddressBar>
          <ExtButton aria-label="ABP">
            <svg width="16" height="16" viewBox="0 0 16 16" aria-hidden="true">
              <path d="M5 0h6l5 5v6l-5 5H5l-5-5V5z" fill="#ed1e45" />
              <text x="8" y="10.500" fontSize="7" fontWeight="700" fill="#fff" textAnchor="middle" fontFamily={UI}>ABP</text>
            </svg>
          </ExtButton>
          <ExtButton aria-label="Ghostery">
            <GhostDisc>
              <svg width="14" height="16" viewBox="0 0 14 16" aria-hidden="true">
                <path d="M2 7a5 5 0 0 1 10 0v6l2 1-4 1-2-1-3 2-1-2-4 0 2-2z" fill="#00aef0" />
                <circle cx="5" cy="6" r="1" fill="#fff" /><circle cx="9" cy="6" r="1" fill="#fff" />
                <path d="M4.500 9q2.500 2 5 0" fill="none" stroke="#fff" />
              </svg>
            </GhostDisc>
            <ExtBadge $dark>0</ExtBadge>
          </ExtButton>
          <ExtButton aria-label="uBlock">
            <svg width="14" height="15" viewBox="0 0 14 15" aria-hidden="true">
              <path d="M7 0l7 2c0 7-2 11-7 13C2 13 0 9 0 2z" fill="#800f12" />
              <path d="M3 5v3h2.500V5M8 4v4M8 8h3V6H8" fill="none" stroke="#fff" strokeWidth="1.200" />
            </svg>
            <ExtBadge>64</ExtBadge>
          </ExtButton>
          <ExtButton aria-label="Extensions">
            <Icon c="#5f6368" sw={1.600}><path d="M1.500 3h4V2a1.500 1.500 0 0 1 3 0v1h4v4h.7a1.500 1.500 0 0 1 0 3h-.7v4.500h-11v-4H2a1.700 1.700 0 0 0 0-3.500h-.5z" /></Icon>
          </ExtButton>
          <VRule $gap={8} />
          <ExtButton aria-label="Profil"><Avatar>F</Avatar></ExtButton>
          <ExtButton aria-label="Menu">
            <svg width="4" height="14" viewBox="0 0 4 14" fill="#5f6368" aria-hidden="true"><circle cx="2" cy="2" r="1.500" /><circle cx="2" cy="7" r="1.500" /><circle cx="2" cy="12" r="1.500" /></svg>
          </ExtButton>
        </Toolbar>
      </Chrome>

      <Bookmarks>
        {bookmarks.map(([t, w]) => (
          <Bookmark key={t} href="#favori" $w={w}><Folder />{t}</Bookmark>
        ))}
        <Bookmark href="#youtube">
          <svg width="16" height="12" viewBox="0 0 16 12" aria-hidden="true"><rect width="16" height="12" rx="3" fill="#f00033" /><path d="M6 3l5 3-5 3z" fill="#fff" /></svg>
          How To Use The Sh...
        </Bookmark>
        <BookmarksEnd>
          <PlainButton aria-label="Autres favoris"><Icon s={10} c="#5f6368" sw={1.400}><path d="M1 1.500L4.500 5 1 8.500M5.500 1.500L9 5 5.500 8.500" /></Icon></PlainButton>
          <VRule $gap={16} />
          <Bookmark href="#tous"><Folder />Tous les favoris</Bookmark>
        </BookmarksEnd>
      </Bookmarks>

      <AppHeader>
        <UserButton aria-label="Utilisateur">
          <Icon s={18} c="#8a8d90" sw={1.200}><circle cx="9" cy="9" r="8.300" /><circle cx="9" cy="6.500" r="2.800" fill="#8a8d90" /><path d="M3.500 13.500c1-3.500 10-3.500 11 0-3 3.500-8 3.500-11 0z" fill="#8a8d90" /></Icon>
        </UserButton>
        <Brand>
          <CmcLogo w={21} h={26} />
          <div>
            <AccountName>CFD</AccountName>
            <AccountId><span>Demo</span> 20600479</AccountId>
          </div>
        </Brand>
        <SearchButton aria-label="Rechercher"><Magnifier s={17} c="#fff" sw={1.500} /></SearchButton>
        <Menus>
          <LayoutRow>
            {layouts.map(([t, w], i) => <LayoutLink key={t} href="#layout" $w={w} $on={i === 0}>{t}</LayoutLink>)}
            <LayoutButton aria-label="Ajouter une page"><Plus s={12} c="#777" sw={1.600} /></LayoutButton>
            <LayoutButton aria-label="Trading en un clic">
              <Icon s={16} c="#888" sw={1.300}><rect x="1" y="2.500" width="8" height="12" rx="4" /><path d="M1 8V6a4 4 0 0 1 4-3.500V8z" fill="#888" /><path d="M10.500 3l1.500 1.500L15.500.5" /></Icon>
            </LayoutButton>
          </LayoutRow>
          <MenuRow>
            {menu.map(([t, icon]) => <MenuItem key={t}>{icon}{t}</MenuItem>)}
          </MenuRow>
        </Menus>
        <AddFunds>
          <Icon w={20} s={14} c="#fff" sw={1.200}><path d="M.6.6h18.800v12.800H.6zM.6 3.500h18.800M19.400 8h-4v3h4" /></Icon>
          <span>Ajouter<br />des Fonds</span>
        </AddFunds>
        <Recap>Afficher le Récap. du Compte</Recap>
        <Collapse aria-label="Réduire"><Icon w={5} s={8} c="#555" sw={1.500}><path d="M4.500 .5L1 4l3.500 3.500" /></Icon></Collapse>
        <ClockBox>
          <Clock>12:54:49</Clock>
          <ClockRow>
            <ClockButton aria-label="Informations">
              <Icon c="#333" sw={1.200}><circle cx="8" cy="8" r="7.300" /><path d="M8 7v5M6.500 7H8M6.500 12h3" strokeWidth="1.600" /><circle cx="8" cy="4.300" r=".6" fill="#333" /></Icon>
            </ClockButton>
            <ClockButton aria-label="Déconnexion"><Icon c="#444" sw={1.500}><path d="M4.500 3.500a6 6 0 1 0 7 0M8 .5V8" /></Icon></ClockButton>
          </ClockRow>
        </ClockBox>
      </AppHeader>

      <Workspace>
        <Viewport>
          <Panels>
            <Panel><Chart c={sp500} /><Footer closed /></Panel>
            <Panel><Chart c={nasdaq} /><Footer closed /></Panel>
            <ProductPanel name="US 30" days="3 Jours" up pct="0,4 %" pts="169,17" bid="42 253,02" ask="42 256,32" spread="3,30" chart={us30} />
            <ProductPanel name="Allemagne 40" days="4 Jours" up={false} pct="0 %" pts="0,59" bid="19 415,81" ask="19 417,01" spread="1,20" chart={dax40} />
          </Panels>
          <HScroll />
        </Viewport>
        <Gutter><VThumb /></Gutter>
      </Workspace>
    </Page>
  );
}
